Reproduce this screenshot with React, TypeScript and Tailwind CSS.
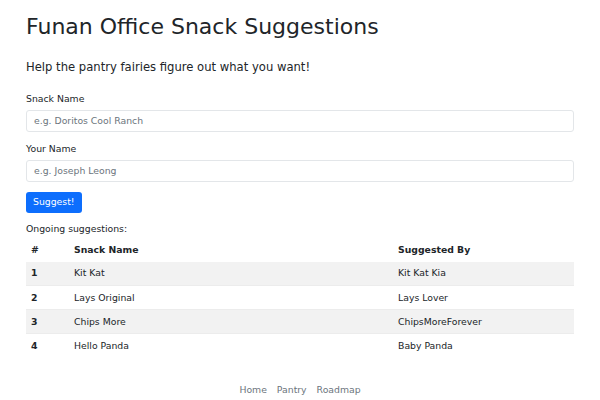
import React from "react";

type Suggestion = {
  id: number;
  snack: string;
  by: string;
};

const suggestions: Suggestion[] = [
  { id: 1, snack: "Kit Kat", by: "Kit Kat Kia" },
  { id: 2, snack: "Lays Original", by: "Lays Lover" },
  { id: 3, snack: "Chips More", by: "ChipsMoreForever" },
  { id: 4, snack: "Hello Panda", by: "Baby Panda" },
];

export default function App() {
  return (
    <div className="min-h-screen bg-white font-['DejaVu_Sans',sans-serif] text-[#212529]">
      <div className="mx-auto w-[548px] pt-[14px]">
        <h1 className="text-[22px] leading-[1.2]">Funan Office Snack Suggestions</h1>
        <p className="mt-[19px] text-[11.6px] leading-[1.5]">
          Help the pantry fairies figure out what you want!
        </p>

        <form className="mt-[15px] text-[9.3px] leading-[1.5]" onSubmit={(e) => e.preventDefault()}>
          <label className="block">Snack Name</label>
          <input
            className="mt-[4px] block h-[22px] w-full rounded-[3px] border border-[#e3e6e9] px-[7px] outline-none placeholder:text-[#6c757d]"
            placeholder="e.g. Doritos Cool Ranch"
          />
          <label className="mt-[10px] block">Your Name</label>
          <input
            className="mt-[4px] block h-[22px] w-full rounded-[3px] border border-[#e3e6e9] px-[7px] outline-none placeholder:text-[#6c757d]"
            placeholder="e.g. Joseph Leong"
          />
          <button className="mt-[10px] h-[21px] rounded-[3px] bg-[#0d6efd] px-[7px] text-white">
            Suggest!
          </button>
        </form>

        <p className="mt-[9px] text-[9.3px] leading-[1.5]">Ongoing suggestions:</p>

        <table className="mt-[2px] w-full table-fixed border-collapse text-left text-[9.3px] leading-[1.5]">
          <colgroup>
            <col className="w-[43px]" />
            <col className="w-[324px]" />
            <col className="w-[181px]" />
          </colgroup>
          <thead>
            <tr className="h-[24px]">
              <th className="px-[5px] font-bold">#</th>
              <th className="px-[5px] font-bold">Snack Name</th>
              <th className="px-[5px] font-bold">Suggested By</th>
            </tr>
          </thead>
          <tbody>
            {suggestions.map((s, i) => (
              <tr
                key={s.id}
                className={`h-[24px] ${i % 2 === 0 ? "bg-[#f2f2f2]" : "bg-white"} ${i < 3 ? "border-b border-[#ececec]" : ""}`}
              >
                <th className="px-[5px] font-bold">{s.id}</th>
                <td className="px-[5px]">{s.snack}</td>
                <td className="px-[5px]">{s.by}</td>
              </tr>
            ))}
          </tbody>
        </table>

        <nav className="mt-[25px] flex justify-center text-[9.3px] leading-[1.5] text-[#6c757d]">
          <a className="px-[5px]">Home</a>
          <a className="px-[5px]">Pantry</a>
          <a className="px-[5px]">Roadmap</a>
        </nav>
      </div>
    </div>
  );
}
